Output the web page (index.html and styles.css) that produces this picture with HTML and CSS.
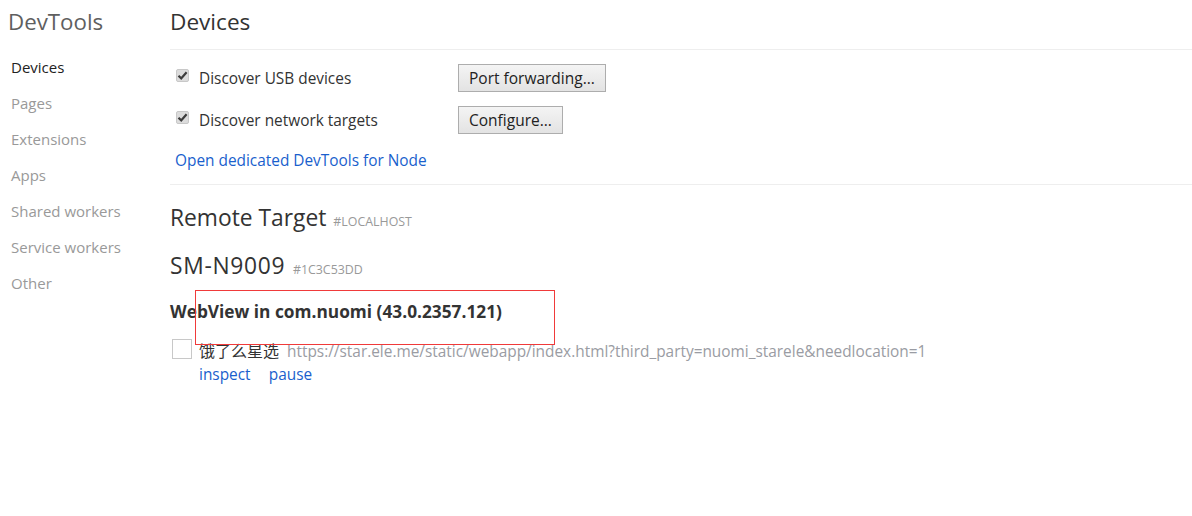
FILE: index.html
```html
<!DOCTYPE html>
<html lang="en">
<head>
    <meta charset="UTF-8">
    <meta name="viewport" content="width=device-width, initial-scale=1.0">
    <title>Inspect with Chrome Developer Tools</title>
    <link rel="stylesheet" href="styles.css">
</head>
<body>
    <div class="page">
        <div class="sidebar">
            <h1>DevTools</h1>
            <ul class="nav">
                <li class="selected">Devices</li>
                <li>Pages</li>
                <li>Extensions</li>
                <li>Apps</li>
                <li>Shared workers</li>
                <li>Service workers</li>
                <li>Other</li>
            </ul>
        </div>
        <div class="content">
            <h2 class="content-header">Devices</h2>
            <div class="config">
                <div class="config-row">
                    <label class="check-label">
                        <span class="checkbox">
                            <svg width="11" height="11" viewBox="0 0 11 11"><path d="M1.5 5.8 L4.2 8.4 L9.6 2.2" fill="none" stroke="#3c3c3c" stroke-width="2.2"/></svg>
                        </span>
                        Discover USB devices
                    </label>
                    <button class="btn">Port forwarding...</button>
                </div>
                <div class="config-row">
                    <label class="check-label">
                        <span class="checkbox">
                            <svg width="11" height="11" viewBox="0 0 11 11"><path d="M1.5 5.8 L4.2 8.4 L9.6 2.2" fill="none" stroke="#3c3c3c" stroke-width="2.2"/></svg>
                        </span>
                        Discover network targets
                    </label>
                    <button class="btn">Configure...</button>
                </div>
                <a class="node-link" href="#">Open dedicated DevTools for Node</a>
            </div>

            <div class="device">
                <h2 class="section-title">Remote Target <span class="sub">#LOCALHOST</span></h2>
                <h2 class="device-name">SM-N9009 <span class="sub">#1C3C53DD</span></h2>
                <div class="browser-name">WebView in com.nuomi (43.0.2357.121)</div>
                <div class="target">
                    <span class="favicon"></span>
                    <div class="target-info">
                        <div class="target-line">
                            <span class="target-name">饿了么星选</span>
                            <span class="target-url">https://star.ele.me/static/webapp/index.html?third_party=nuomi_starele&amp;needlocation=1</span>
                        </div>
                        <div class="actions">
                            <a href="#">inspect</a>
                            <a href="#">pause</a>
                        </div>
                    </div>
                </div>
            </div>
            <div class="highlight"></div>
        </div>
    </div>
</body>
</html>
```

FILE: styles.css
```css
body {
    font-family: "Open Sans", "Noto Sans CJK SC", sans-serif;
    background-color: #fff;
    color: #333;
    margin: 0;
    padding: 0;
}
.page {
    display: flex;
    height: 516px;
}
.sidebar {
    width: 170px;
    flex-shrink: 0;
}
.sidebar h1 {
    font-size: 22.3px;
    font-weight: normal;
    color: #5f5f5f;
    margin: 0;
    padding-left: 8px;
    line-height: 44px;
}
.nav {
    list-style: none;
    margin: 5px 0 0;
    padding: 0 0 0 11px;
}
.nav li {
    font-size: 15px;
    line-height: 36px;
    color: #999;
}
.nav li.selected {
    color: #222;
}
.content {
    flex: 1;
    position: relative;
}
.content-header {
    font-size: 22.6px;
    font-weight: normal;
    color: #333;
    margin: 0;
    line-height: 44px;
    height: 49px;
    border-bottom: 1px solid #eee;
}
.config {
    padding: 14px 0 13px 5px;
    border-bottom: 1px solid #eee;
}
.config-row {
    display: flex;
    align-items: center;
    height: 28px;
    margin-bottom: 14px;
}
.check-label {
    display: flex;
    align-items: center;
    width: 283px;
    font-size: 15.4px;
    color: #333;
}
.checkbox {
    width: 13px;
    height: 13px;
    margin: 0 10px 0 1px;
    background-color: #dcdcdc;
    border: 1px solid #c8c8c8;
    border-radius: 2px;
    box-sizing: border-box;
    display: flex;
    align-items: center;
    justify-content: center;
    position: relative;
    top: -3px;
}
.btn {
    font-family: inherit;
    font-size: 15.5px;
    color: #222;
    height: 28px;
    padding: 0 10px;
    background: linear-gradient(#f4f4f4, #e3e3e3);
    border: 1px solid #adadad;
    border-radius: 0;
}
.node-link {
    display: block;
    margin-top: 17px;
    font-size: 15.4px;
    line-height: 20px;
    color: #1a5fcd;
    text-decoration: none;
}
.device {
    padding-top: 18px;
}
.section-title,
.device-name {
    font-size: 22.8px;
    font-weight: normal;
    color: #333;
    margin: 0;
    line-height: 30px;
}
.device-name {
    margin-top: 18px;
    letter-spacing: 0.7px;
}
.sub {
    font-size: 12.4px;
    line-height: 1;
    letter-spacing: 0;
    color: #999;
    margin-left: 1px;
}
.browser-name {
    font-size: 17.3px;
    font-weight: bold;
    color: #333;
    line-height: 22px;
    margin-top: 20px;
}
.target {
    display: flex;
    margin-top: 16px;
}
.favicon {
    width: 18px;
    height: 18px;
    border: 1px solid #c8c8c8;
    margin: 0 7px 0 2px;
}
.target-line {
    font-size: 15.4px;
    line-height: 20px;
    margin-top: 2px;
}
.target-name {
    font-size: 16px;
    color: #333;
    margin-right: 4px;
}
.target-url {
    color: #9a9ca3;
}
.actions {
    line-height: 20px;
    margin-top: 2px;
}
.actions a {
    font-size: 15.4px;
    color: #1a5fcd;
    text-decoration: none;
    margin-right: 14px;
}
.highlight {
    position: absolute;
    left: 25px;
    top: 290px;
    width: 358px;
    height: 53px;
    border: 1px solid #f03a3a;
}
```
